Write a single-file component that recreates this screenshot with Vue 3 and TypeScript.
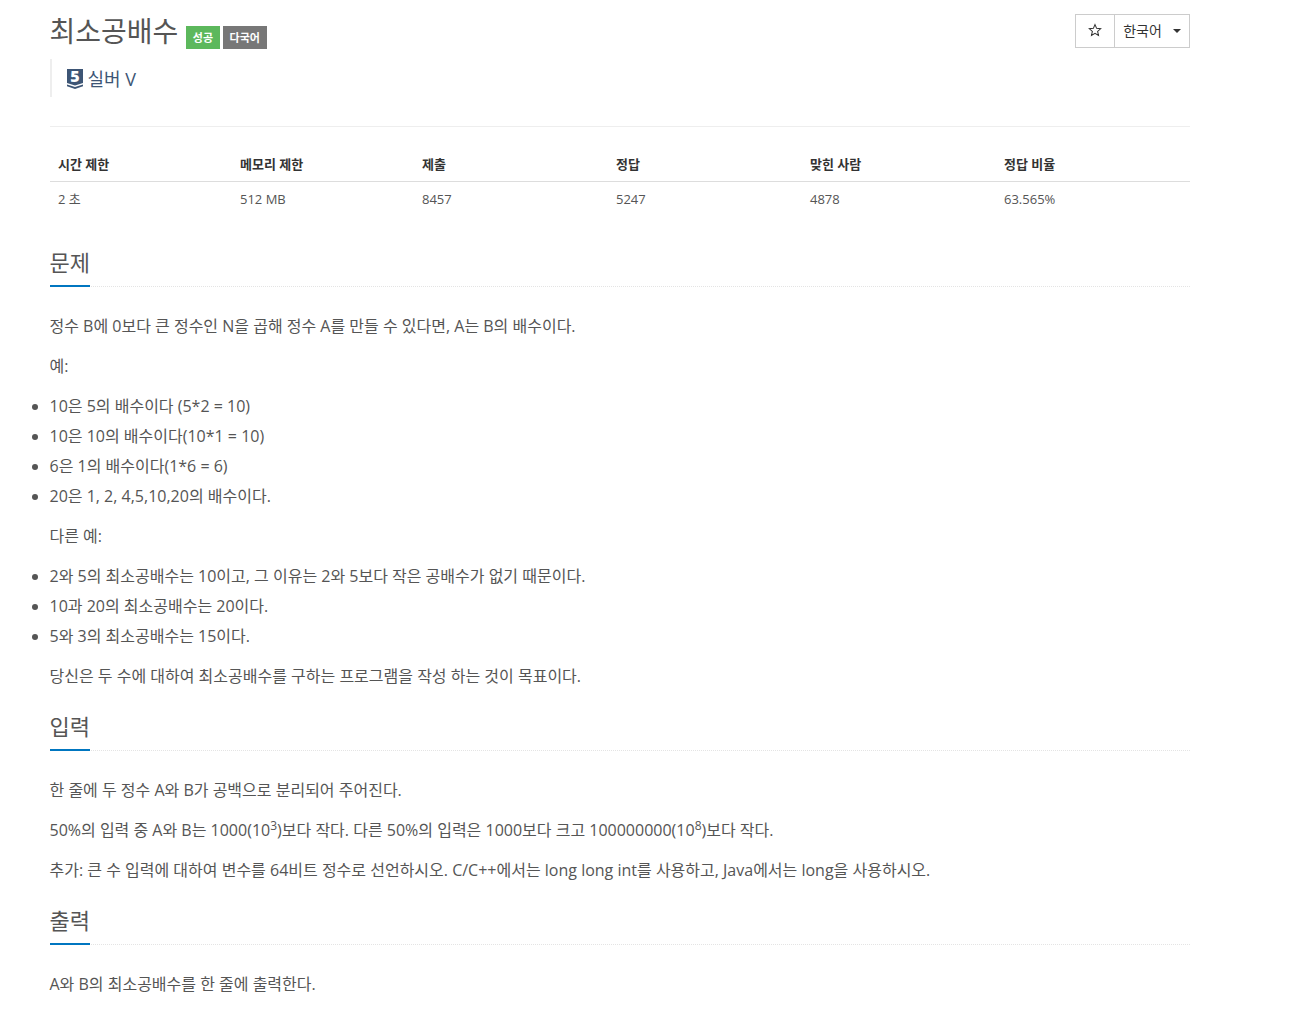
<script setup lang="ts">
// 문제 페이지: 제목 + 제한 표 + 본문 섹션
interface Stat { label: string; value: string; width: number }

const stats: Stat[] = [
  { label: '시간 제한', value: '2 초', width: 182 },
  { label: '메모리 제한', value: '512 MB', width: 182 },
  { label: '제출', value: '8457', width: 194 },
  { label: '정답', value: '5247', width: 194 },
  { label: '맞힌 사람', value: '4878', width: 194 },
  { label: '정답 비율', value: '63.565%', width: 194 },
]

const examples = [
  '10은 5의 배수이다 (5*2 = 10)',
  '10은 10의 배수이다(10*1 = 10)',
  '6은 1의 배수이다(1*6 = 6)',
  '20은 1, 2, 4,5,10,20의 배수이다.',
]

const otherExamples = [
  '2와 5의 최소공배수는 10이고, 그 이유는 2와 5보다 작은 공배수가 없기 때문이다.',
  '10과 20의 최소공배수는 20이다.',
  '5와 3의 최소공배수는 15이다.',
]
</script>

<template>
  <div class="page">
    <header class="page-header">
      <div class="title-row">
        <div class="title-main">
          <h1 class="title">최소공배수</h1>
          <span class="label label-success">성공</span>
          <span class="label label-gray">다국어</span>
        </div>
        <div class="btn-group">
          <button class="btn btn-star" type="button">
            <svg width="14" height="14" viewBox="0 0 24 24" fill="none" stroke="#333" stroke-width="1.8">
              <path d="M12 2.8l2.8 6.4 6.9.7-5.2 4.6 1.5 6.8-6-3.5-6 3.5 1.5-6.8-5.2-4.6 6.9-.7z" />
            </svg>
          </button>
          <button class="btn btn-lang" type="button">
            한국어
            <span class="caret"></span>
          </button>
        </div>
      </div>
      <blockquote class="tier">
        <svg class="tier-icon" width="16" height="20" viewBox="0 0 16 20">
          <path d="M0 0h16v14l-8 2.5-8-2.5z" fill="#3d5575" />
          <path d="M0 15.4l8 2.7 8-2.7v1.8L8 20l-8-2.8z" fill="#3d5575" />
          <text x="8" y="13" text-anchor="middle" class="tier-num">5</text>
        </svg>
        <span class="tier-name">실버 V</span>
      </blockquote>
    </header>

    <table class="stats">
      <thead>
        <tr>
          <th v-for="s in stats" :key="s.label" :style="{ width: `${s.width}px` }">{{ s.label }}</th>
        </tr>
      </thead>
      <tbody>
        <tr>
          <td v-for="s in stats" :key="s.label">{{ s.value }}</td>
        </tr>
      </tbody>
    </table>

    <section class="section">
      <div class="headline"><h2>문제</h2></div>
      <div class="body">
        <p>정수 B에 0보다 큰 정수인 N을 곱해 정수 A를 만들 수 있다면, A는 B의 배수이다.</p>
        <p>예:</p>
        <ul>
          <li v-for="e in examples" :key="e">{{ e }}</li>
        </ul>
        <p>다른 예:</p>
        <ul>
          <li v-for="e in otherExamples" :key="e">{{ e }}</li>
        </ul>
        <p>당신은 두 수에 대하여 최소공배수를 구하는 프로그램을 작성 하는 것이 목표이다.</p>
      </div>
    </section>

    <section class="section">
      <div class="headline"><h2>입력</h2></div>
      <div class="body">
        <p>한 줄에 두 정수 A와 B가 공백으로 분리되어 주어진다.</p>
        <p>50%의 입력 중 A와 B는 1000(10<sup>3</sup>)보다 작다. 다른 50%의 입력은 1000보다 크고 100000000(10<sup>8</sup>)보다 작다.</p>
        <p>추가: 큰 수 입력에 대하여 변수를 64비트 정수로 선언하시오. C/C++에서는 long long int를 사용하고, Java에서는 long을 사용하시오.</p>
      </div>
    </section>

    <section class="section">
      <div class="headline"><h2>출력</h2></div>
      <div class="body">
        <p>A와 B의 최소공배수를 한 줄에 출력한다.</p>
      </div>
    </section>
  </div>
</template>

<style>
body {
  margin: 0;
  background: #fff;
}
</style>

<style scoped>
.page {
  width: 1140px;
  margin-left: 49.5px;
  font-family: 'Open Sans', 'Noto Sans CJK KR', sans-serif;
  font-size: 14px;
  color: #555;
}
.page-header {
  padding-top: 14px;
  padding-bottom: 29px;
  border-bottom: 1px solid #eee;
}
.title-row {
  display: flex;
  justify-content: space-between;
  align-items: flex-start;
}
.title-main {
  display: flex;
  align-items: flex-end;
}
.title {
  margin: 0 8px 0 0;
  font-size: 28px;
  line-height: 34px;
  font-weight: 400;
  color: #555;
}
.label {
  display: inline-block;
  height: 23px;
  line-height: 24px;
  padding: 0 6.5px;
  margin: 0 3px -1px 0;
  font-size: 11px;
  font-weight: 700;
  color: #fff;
}
.label-success {
  background: #5cb85c;
}
.label-gray {
  padding: 0 7px;
  background: #777;
}
.btn-group {
  display: flex;
}
.btn {
  height: 34px;
  background: #fff;
  border: 1px solid #ccc;
  font-family: inherit;
  font-size: 14px;
  color: #333;
  display: flex;
  align-items: center;
  justify-content: center;
  padding: 0 0 3px;
}
.btn-star {
  width: 40px;
}
.btn-lang {
  width: 76px;
  margin-left: -1px;
  padding-left: 1px;
  gap: 11px;
}
.caret {
  width: 0;
  height: 0;
  margin-top: 3px;
  border-top: 4px solid #333;
  border-left: 4px solid transparent;
  border-right: 4px solid transparent;
}
.tier {
  margin: 11px 0 0;
  padding: 0 0 0 15px;
  height: 38px;
  border-left: 2px solid #eee;
  display: flex;
  align-items: center;
  gap: 5px;
  font-size: 18px;
  color: #3d5575;
}
.tier-icon {
  flex: none;
  margin-top: 2px;
  overflow: visible;
}
.tier-name {
  margin-top: -1px;
}
.tier-num {
  font-family: 'Open Sans', sans-serif;
  font-size: 16px;
  font-weight: 800;
  fill: #fff;
}
.stats {
  width: 1140px;
  margin: 19px 0 27px 0.5px;
  border-collapse: collapse;
  table-layout: fixed;
  font-size: 13px;
  color: #333;
}
.stats th {
  box-sizing: border-box;
  text-align: left;
  padding: 8px 8px 7px;
  line-height: 20px;
  font-weight: 700;
  border-bottom: 1px solid #ddd;
  color: #333;
}
.stats td {
  padding: 7px 8px 8px;
  line-height: 20px;
  color: #555;
}
.headline {
  border-bottom: 1px dotted #e4e4e4;
  margin-top: 17px;
}
.headline h2 {
  display: inline-block;
  margin: 0 0 -1px;
  padding-bottom: 5px;
  font-size: 22px;
  line-height: 36px;
  font-weight: 400;
  color: #555;
  border-bottom: 2px solid #0076c0;
}
.body {
  padding-top: 24px;
  font-size: 16px;
  line-height: 30px;
}
.body p {
  margin: 0 0 10px;
}
.body ul {
  margin: 0 0 10px;
  padding: 0;
  list-style: disc;
}
.body sup {
  font-size: 12px;
  line-height: 0;
}
</style>
